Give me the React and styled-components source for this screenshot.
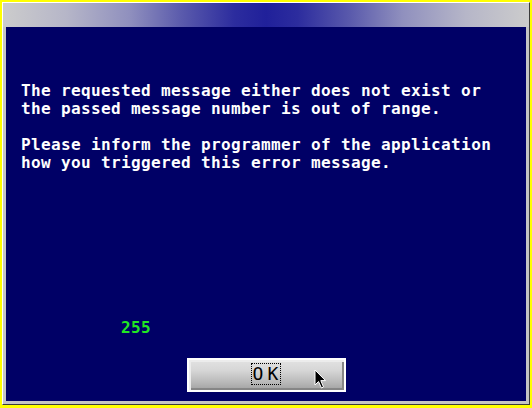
import React from "react";
import styled, { createGlobalStyle } from "styled-components";

const Global = createGlobalStyle`
  html, body { margin: 0; padding: 0; background: #ffff00; }
  body { width: 532px; height: 408px; overflow: hidden; }
  #root { padding: 2px 0 0 2px; }
`;

const Window = styled.div`
  width: 528px;
  height: 403px;
  box-sizing: border-box;
  border-top: 1px solid #ffffff;
  border-left: 1px solid #ffffff;
  border-right: 1px solid #3a3a3a;
  border-bottom: 1px solid #3a3a3a;
  background: #c4c4c4;
  display: flex;
  flex-direction: column;
`;

const TitleBar = styled.div`
  height: 24px;
  flex: none;
  background: linear-gradient(
    to right,
    #cccccc 0%,
    #b6b6c8 12%,
    #9090be 24%,
    #5a5aac 34%,
    #2c2c9e 44%,
    #20209a 50%,
    #2c2c9e 56%,
    #5a5aac 66%,
    #9090be 76%,
    #b6b6c8 88%,
    #cccccc 100%
  );
`;

const Content = styled.div`
  flex: 1;
  margin: 0 3px 3px 3px;
  background: #000066;
  display: flex;
  flex-direction: column;
  padding: 55px 15px 9px 15px;
  font-family: "DejaVu Sans Mono", "Liberation Mono", monospace;
  font-weight: bold;
  font-size: 16px;
  line-height: 18px;
  letter-spacing: 0.37px;
  color: #ffffff;
`;

const Paragraph = styled.p`
  margin: 0 0 18px 0;
  white-space: pre;
`;

const Footer = styled.div`
  margin-top: auto;
  display: flex;
  flex-direction: column;
`;

const Code = styled.div`
  color: #22e822;
  padding-left: 100px;
  margin-bottom: 21px;
`;

const ButtonRow = styled.div`
  display: flex;
  justify-content: center;
`;

const Button = styled.div`
  position: relative;
  width: 159px;
  height: 34px;
  box-sizing: border-box;
  border: 2px solid #ffffff;
  background: linear-gradient(#e2e2e2 0%, #d6d6d6 35%, #b8b8b8 75%, #a2a2a2 100%);
  box-shadow: inset 2px 2px 0 #ececec, inset -2px -2px 0 #868686;
  display: flex;
  align-items: center;
  justify-content: center;
`;

const Focus = styled.div`
  width: 30px;
  height: 22px;
  box-sizing: border-box;
  border: 1px dotted #000000;
  display: flex;
  align-items: center;
  padding-left: 1px;
  font-size: 18px;
  font-weight: normal;
  letter-spacing: 4.2px;
  color: #000000;
  margin-left: -1px;
  margin-top: -2px;
`;

const Cursor = styled.svg`
  position: absolute;
  left: 125px;
  top: 9px;
`;

export default function App() {
  return (
    <>
      <Global />
      <Window>
        <TitleBar />
        <Content>
          <Paragraph>
            {"The requested message either does not exist or\nthe passed message number is out of range."}
          </Paragraph>
          <Paragraph>
            {"Please inform the programmer of the application\nhow you triggered this error message."}
          </Paragraph>
          <Footer>
            <Code>255</Code>
            <ButtonRow>
              <Button>
                <Focus>OK</Focus>
                <Cursor width="14" height="21" viewBox="0 0 14 21">
                  <path
                    d="M1 1 L1 16 L4.5 12.5 L7.5 19 L9.5 18 L6.8 11.6 L11.5 11.6 Z"
                    fill="#000000"
                    stroke="#ffffff"
                    strokeWidth="1"
                  />
                </Cursor>
              </Button>
            </ButtonRow>
          </Footer>
        </Content>
      </Window>
    </>
  );
}
